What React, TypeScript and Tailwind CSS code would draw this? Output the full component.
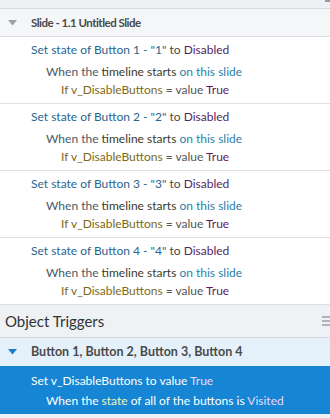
const font = { fontFamily: 'Lato, "Noto Sans", sans-serif' };

type Row = { n: string };

const rows: Row[] = [{ n: "1" }, { n: "2" }, { n: "3" }, { n: "4" }];

function TriangleDown({ color }: { color: string }) {
  return (
    <svg width="9" height="6" viewBox="0 0 9 6" className="shrink-0">
      <path d="M0 0 L9 0 L4.5 5.5 Z" fill={color} />
    </svg>
  );
}

function ActionRow({ n }: Row) {
  return (
    <div className="flex flex-col h-[67px] border-b border-[#dcdfe3] bg-white pt-[4px] text-[12px] leading-[18px]">
      <div className="pl-[31px] whitespace-nowrap">
        <span className="text-[#2a6590]">
          Set state of Button {n} - "{n}"
        </span>{" "}
        <span className="text-[#4a4a4a]">to</span>{" "}
        <span className="text-[#55275f]">Disabled</span>
      </div>
      <div className="pl-[46px] mt-[4px] whitespace-nowrap">
        <span className="text-[#4b5866]">When the</span>{" "}
        <span className="text-[#3a3a2a]">timeline starts</span>{" "}
        <span className="text-[#2a7fac]">on this slide</span>
      </div>
      <div className="pl-[61px] whitespace-nowrap">
        <span className="text-[#7c6a12]">If v_DisableButtons</span>{" "}
        <span className="text-[#555555]">= value</span>{" "}
        <span className="text-[#66195a]">True</span>
      </div>
    </div>
  );
}

export default function App() {
  return (
    <div className="w-[330px] h-[418px] overflow-hidden bg-[#edf1f4]" style={font}>
      <div className="h-[9px] border-b border-[#d5dbe0] bg-[#edf1f4] flex justify-end">
        <div className="w-[5px] h-[2px] bg-[#999]" />
      </div>

      <div className="flex items-center h-[28px] bg-[#f4f6f8] border-b border-[#d9dde1]">
        <div className="w-[31px] flex justify-center pl-[1px] pr-[7px]">
          <TriangleDown color="#9aa1a8" />
        </div>
        <span className="font-bold text-[11.5px] tracking-[-0.5px] text-[#4a4a4a]">Slide - 1.1 Untitled Slide</span>
      </div>

      {rows.map((r) => (
        <ActionRow key={r.n} n={r.n} />
      ))}

      <div className="flex items-center justify-between h-[33px] bg-[#eef2f5] border-b border-[#d5dbe0]">
        <span className="pl-[5px] text-[15px] text-[#333]">Object Triggers</span>
        <svg width="8" height="10" viewBox="0 0 8 10">
          <path d="M0 1 H8 M0 5 H8 M0 9 H8" stroke="#9aa0a6" strokeWidth="1.5" />
        </svg>
      </div>

      <div className="flex items-center h-[28px] bg-[#e5f1fa]">
        <div className="w-[31px] flex justify-center pl-[1px] pr-[7px]">
          <TriangleDown color="#1a7fcf" />
        </div>
        <span className="font-bold text-[12.5px] text-[#4a4a4a]">Button 1, Button 2, Button 3, Button 4</span>
      </div>

      <div className="flex flex-col h-[48px] bg-[#1685d3] pt-[6px] text-[12px] leading-[18px] text-white">
        <div className="pl-[31px] whitespace-nowrap">
          Set v_DisableButtons to value <span className="text-[#e6d8ff]">True</span>
        </div>
        <div className="pl-[46px] mt-[2px] whitespace-nowrap">
          When the <span className="text-[#eef5b8]">state</span> of all of the buttons is{" "}
          <span className="text-[#e6d8ff]">Visited</span>
        </div>
      </div>
    </div>
  );
}
